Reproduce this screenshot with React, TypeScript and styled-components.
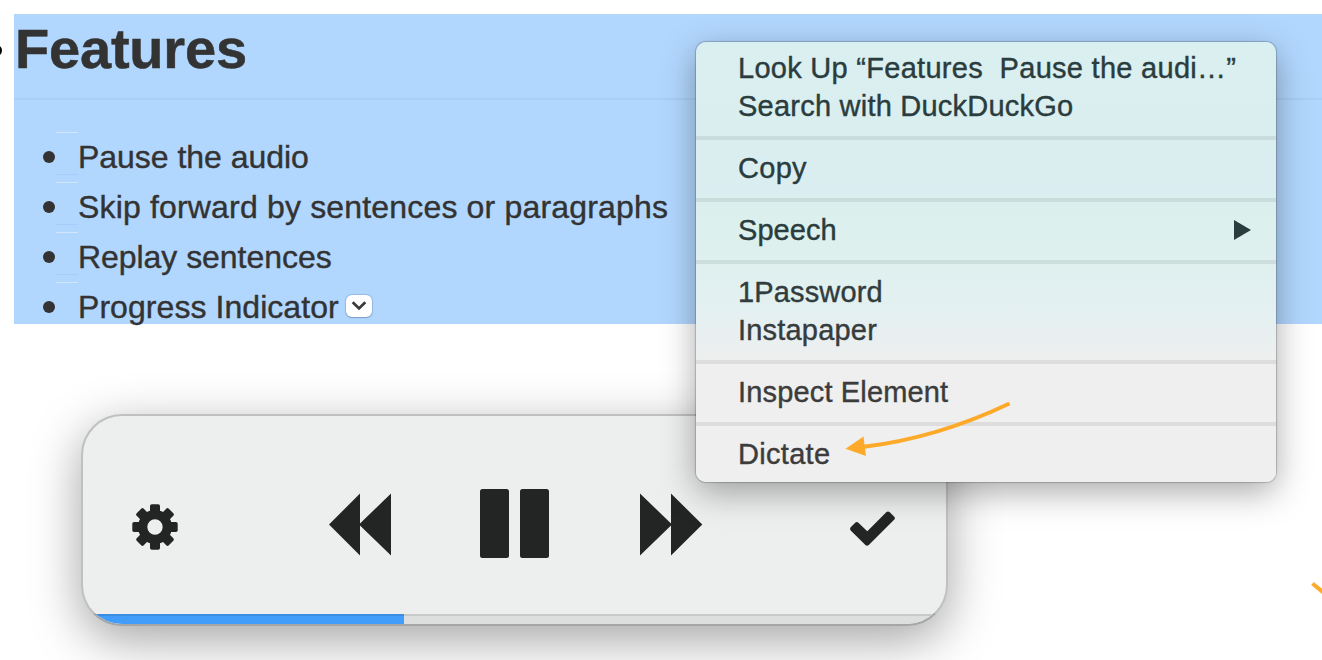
import React from "react";
import styled, { createGlobalStyle } from "styled-components";

const GlobalStyle = createGlobalStyle`
  html, body { margin: 0; padding: 0; background: #fff; }
  body { font-family: "Liberation Sans", Arial, sans-serif; }
`;

const Page = styled.main`
  position: relative;
  box-sizing: border-box;
  width: 1322px;
  height: 660px;
  padding: 14px 0 0 14px;
  overflow: hidden;
  background: #fff;
`;

const OuterBullet = styled.span`
  position: absolute;
  left: -9px;
  top: 45px;
  width: 11px;
  height: 11px;
  border-radius: 50%;
  background: #000;
`;

const Selection = styled.section`
  height: 310px;
  background: #b2d7fe;
  color: #333;
`;

const Heading = styled.h1`
  box-sizing: border-box;
  height: 86px;
  margin: 0 0 32px;
  padding-left: 1px;
  border-bottom: 2px solid #a8cff6;
  font-size: 56px;
  line-height: 69px;
  letter-spacing: -0.2px;
  white-space: nowrap;
  -webkit-text-stroke: 0.5px currentColor;
`;

const FeatureList = styled.ul`
  margin: 0;
  padding: 0 0 0 29px;
  list-style: none;
`;

const Feature = styled.li`
  display: flex;
  align-items: center;
  height: 50px;
`;

const Bullet = styled.span`
  width: 12px;
  height: 12px;
  border-radius: 50%;
  background: #333;
`;

const Guides = styled.span`
  box-sizing: border-box;
  align-self: flex-start;
  width: 22px;
  height: 43px;
  margin-left: 1px;
  border-top: 1px solid #d3e7fb;
  border-bottom: 1px solid #a6cefd;

  li:last-child > & {
    border-bottom-color: transparent;
  }
`;

const Label = styled.span<{ $spacing: number }>`
  letter-spacing: ${(p) => p.$spacing}px;
  white-space: pre;
  -webkit-text-stroke: 0.4px currentColor;
`;

const FeatureText = styled(Label)`
  font-size: 32px;
  line-height: 50px;
`;

const Disclosure = styled.span`
  display: flex;
  align-items: center;
  justify-content: center;
  width: 26px;
  height: 22px;
  margin: -3px 0 0 7px;
  border-radius: 6px;
  background: #fff;
  box-shadow: 0 0 1px 1px rgba(90, 120, 160, 0.3), 0 1px 1px rgba(60, 90, 130, 0.3);
`;

const Player = styled.section`
  display: flex;
  flex-direction: column;
  box-sizing: border-box;
  width: 867px;
  height: 212px;
  margin: 90px 0 0 67px;
  border: 2px solid #bfc0c0;
  border-bottom-color: #a5a6a6;
  border-radius: 41px;
  overflow: hidden;
  background: #edefee;
  box-shadow: 0 14px 50px rgba(0, 0, 0, 0.36);
`;

const Controls = styled.div`
  display: flex;
  flex: 1;
  align-items: flex-start;
  padding: 0 50px 0 49px;
  color: #232524;
`;

const Control = styled.span<{ $top: number; $gap?: number }>`
  display: flex;
  margin-top: ${(p) => p.$top}px;
  margin-left: ${(p) => p.$gap ?? 0}px;
`;

const Track = styled.div`
  box-sizing: border-box;
  height: 10px;
  border-top: 2px solid #c8c9c9;
  background: #dddfde;
`;

const Progress = styled.div`
  box-sizing: border-box;
  width: 321px;
  height: 10px;
  margin-top: -2px;
  border-top: 2px solid #3c8ce0;
  background: #429cfa;
`;

const Menu = styled.nav`
  position: absolute;
  left: 696px;
  top: 42px;
  box-sizing: border-box;
  width: 580px;
  height: 440px;
  padding: 8px 0;
  border-radius: 10px;
  background: linear-gradient(#daefef 0, #daeef1 150px, #dbf0ec 165px, #dff0ef 225px, #e4f0f1 270px, #eaeff0 300px, #efefef 321px);
  color: #2a3c3d;
  box-shadow: 0 0 1px 1px rgba(0, 0, 0, 0.2), 0 10px 34px rgba(0, 0, 0, 0.34);
`;

const MenuItem = styled.div<{ $color?: string }>`
  display: flex;
  align-items: center;
  justify-content: space-between;
  height: 38px;
  box-sizing: border-box;
  padding: 0 25px 2px 42px;
  font-size: 29px;
  line-height: 36px;
  color: ${(p) => p.$color ?? "inherit"};
`;

const Separator = styled.div`
  height: 4px;
  margin: 10px 0;
  background: rgba(0, 0, 0, 0.075);
`;

const Annotations = styled.svg`
  position: absolute;
  left: 0;
  top: 0;
  pointer-events: none;
`;

const features = [
  { text: "Pause the audio", spacing: -0.03 },
  { text: "Skip forward by sentences or paragraphs", spacing: 0.17 },
  { text: "Replay sentences", spacing: -0.05 },
  { text: "Progress Indicator", spacing: 0.06, disclosure: true },
];

type Item = { text: string; spacing: number; color?: string; submenu?: boolean };

const menuGroups: Item[][] = [
  [
    { text: "Look Up “Features  Pause the audi…”", spacing: 0.28 },
    { text: "Search with DuckDuckGo", spacing: 0.23 },
  ],
  [{ text: "Copy", spacing: 0.3 }],
  [{ text: "Speech", spacing: 0.05, submenu: true }],
  [
    { text: "1Password", spacing: 0.15, color: "#303c3d" },
    { text: "Instapaper", spacing: 0.2, color: "#363c3d" },
  ],
  [{ text: "Inspect Element", spacing: 0.16, color: "#3c3c3c" }],
  [{ text: "Dictate", spacing: 0.3, color: "#3c3c3c" }],
];

const Gear = () => (
  <svg width="46" height="46" viewBox="-23 -23 46 46" fill="currentColor">
    {[0, 45, 90, 135, 180, 225, 270, 315].map((a) => (
      <rect key={a} transform={`rotate(${a})`} x="-5" y="-22.7" width="10" height="12" rx="1.8" />
    ))}
    <path fillRule="evenodd" d="M0-17A17 17 0 1 1 0 17A17 17 0 1 1 0-17ZM0-7.7A7.7 7.7 0 1 0 0 7.7A7.7 7.7 0 1 0 0-7.7Z" />
  </svg>
);

const Rewind = () => (
  <svg width="63" height="64" viewBox="0 0 63 64" fill="currentColor">
    <path d="M0 31.5 31 .5v30L62 .5v62L31 32.5v30Z" />
  </svg>
);

const Pause = () => (
  <svg width="70" height="70" viewBox="0 0 70 70" fill="currentColor">
    <rect x="0" y="0" width="29" height="69" rx="2.5" />
    <rect x="40" y="0" width="29" height="69" rx="2.5" />
  </svg>
);

const Forward = () => (
  <svg width="63" height="64" viewBox="0 0 63 64" fill="currentColor">
    <path d="M62.3 31.5 31 .5v30L0 .5v62L31 32.5v30Z" />
  </svg>
);

const Check = () => (
  <svg width="46" height="36" viewBox="0 0 46 36" fill="currentColor">
    <path d="M.7 16.2 5.2 11.7Q6.8 10.3 8.4 11.7L17.3 20.3 36.5 1Q38 -.2 39.5 1L44.3 5.8Q45.5 7.2 44.3 8.6L18.8 34Q17.1 35.4 15.4 34L.7 19.4Q-.6 17.8 .7 16.2Z" />
  </svg>
);

export default function App() {
  return (
    <Page>
      <GlobalStyle />
      <OuterBullet />
      <Selection>
        <Heading>Features</Heading>
        <FeatureList>
          {features.map((f) => (
            <Feature key={f.text}>
              <Bullet />
              <Guides />
              <FeatureText $spacing={f.spacing}>{f.text}</FeatureText>
              {f.disclosure && (
                <Disclosure>
                  <svg width="16" height="10" viewBox="0 0 16 10" fill="none" stroke="#3a3a3a" strokeWidth="2.8">
                    <path d="M1.7 1.3 8 7.4l6.3-6.1" />
                  </svg>
                </Disclosure>
              )}
            </Feature>
          ))}
        </FeatureList>
      </Selection>

      <Player>
        <Controls>
          <Control $top={88}><Gear /></Control>
          <Control $top={76.5} $gap={151}><Rewind /></Control>
          <Control $top={73} $gap={88}><Pause /></Control>
          <Control $top={76.5} $gap={90}><Forward /></Control>
          <Control $top={94.5} $gap={146.5}><Check /></Control>
        </Controls>
        <Track><Progress /></Track>
      </Player>

      <Menu>
        {menuGroups.map((group, i) => (
          <React.Fragment key={i}>
            {i > 0 && <Separator />}
            {group.map((item) => (
              <MenuItem key={item.text} $color={item.color}>
                <Label $spacing={item.spacing}>{item.text}</Label>
                {item.submenu && (
                  <svg width="17" height="20" viewBox="0 0 17 20" fill="currentColor">
                    <path d="M0 0 17 10 0 20Z" />
                  </svg>
                )}
              </MenuItem>
            ))}
          </React.Fragment>
        ))}
      </Menu>

      <Annotations width="1322" height="660" fill="none" stroke="#fdaa2b" strokeWidth="4">
        <path d="M1009.5 403.5Q937 438 864 446.8" />
        <path d="M845.5 448.7 863.5 436.5 866 456Z" fill="#fdaa2b" stroke="none" />
        <path d="M1312.5 583.5 1324 593" />
      </Annotations>
    </Page>
  );
}
